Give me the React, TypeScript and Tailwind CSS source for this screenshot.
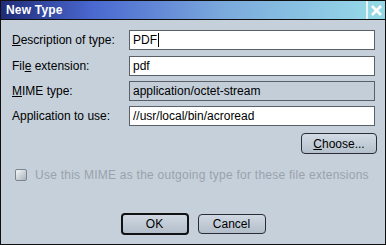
import React from "react";

const font = { fontFamily: '"Liberation Sans", Arial, sans-serif' };

function Field({ value, gray, caret }: { value: string; gray?: boolean; caret?: boolean }) {
  return (
    <div
      className={`h-[20px] w-[246px] border border-[#5a6068] flex items-center pl-[3px] text-[12px] text-black ${
        gray ? "bg-[#c3ced9]" : "bg-white"
      }`}
    >
      <span>{value}</span>
      {caret && <span className="inline-block w-[1px] h-[14px] bg-black ml-[1px]" />}
    </div>
  );
}

export default function App() {
  return (
    <div
      className="w-[386px] h-[245px] bg-[#c5d0db] border border-[#101010] flex flex-col overflow-hidden"
      style={font}
    >
      <div className="h-[19px] flex border-b border-[#101010] shrink-0">
        <div className="flex-1 flex items-center pl-[5px] bg-[linear-gradient(to_right,#1f2b78_0%,#4a68d0_25%,#7aa8dc_60%,#94d6e6_100%)]">
          <span className="text-white font-bold text-[12px] tracking-[0.2px]">New Type</span>
        </div>
        <div className="w-[19px] bg-[#94d8e6] border-l-[2px] border-[#e8f4f8] flex items-center justify-center">
          <svg width="13" height="13" viewBox="0 0 13 13">
            <path d="M2 2 L11 11 M11 2 L2 11" stroke="white" strokeWidth="2.6" />
          </svg>
        </div>
      </div>

      <div className="flex flex-col pl-[11px] pt-[10px] text-[12px] text-black">
        <div className="flex items-center gap-0 h-[20px]">
          <span className="w-[117px]"><u>D</u>escription of type:</span>
          <Field value="PDF" caret />
        </div>
        <div className="flex items-center h-[20px] mt-[6px]">
          <span className="w-[117px]">Fil<u>e</u> extension:</span>
          <Field value="pdf" />
        </div>
        <div className="flex items-center h-[20px] mt-[5px]">
          <span className="w-[117px]"><u>M</u>IME type:</span>
          <Field value="application/octet-stream" gray />
        </div>
        <div className="flex items-center h-[20px] mt-[5px]">
          <span className="w-[117px]">Application to use:</span>
          <Field value="//usr/local/bin/acroread" />
        </div>

        <div className="flex justify-end pr-[8px] mt-[7px]">
          <button className="w-[76px] h-[21px] rounded-[4px] border border-[#2a2e34] bg-[linear-gradient(to_bottom,#d2dbe4,#b4c0cc)] text-[12px] text-black flex items-center justify-center">
            <span><u>C</u>hoose...</span>
          </button>
        </div>

        <div className="flex items-center mt-[12px] pl-[3px]">
          <div className="w-[12px] h-[12px] rounded-[2px] border border-[#7c848c] bg-[linear-gradient(135deg,#f4f6f8,#a8b2bc)]" />
          <span className="ml-[8px] text-[#9aa2ab] tracking-[0.25px]">Use this MIME as the outgoing type for these file extensions</span>
        </div>

        <div className="flex justify-center gap-[9px] mt-[29px] -ml-[11px]">
          <button className="w-[68px] h-[22px] rounded-[4px] border-2 border-[#101214] bg-[linear-gradient(to_bottom,#d0d9e2,#b2beca)] text-[12px] text-black">
            OK
          </button>
          <button className="w-[68px] h-[20px] mt-[1px] rounded-[4px] border border-[#2a2e34] bg-[linear-gradient(to_bottom,#d0d9e2,#b2beca)] text-[12px] text-black">
            Cancel
          </button>
        </div>
      </div>
    </div>
  );
}
